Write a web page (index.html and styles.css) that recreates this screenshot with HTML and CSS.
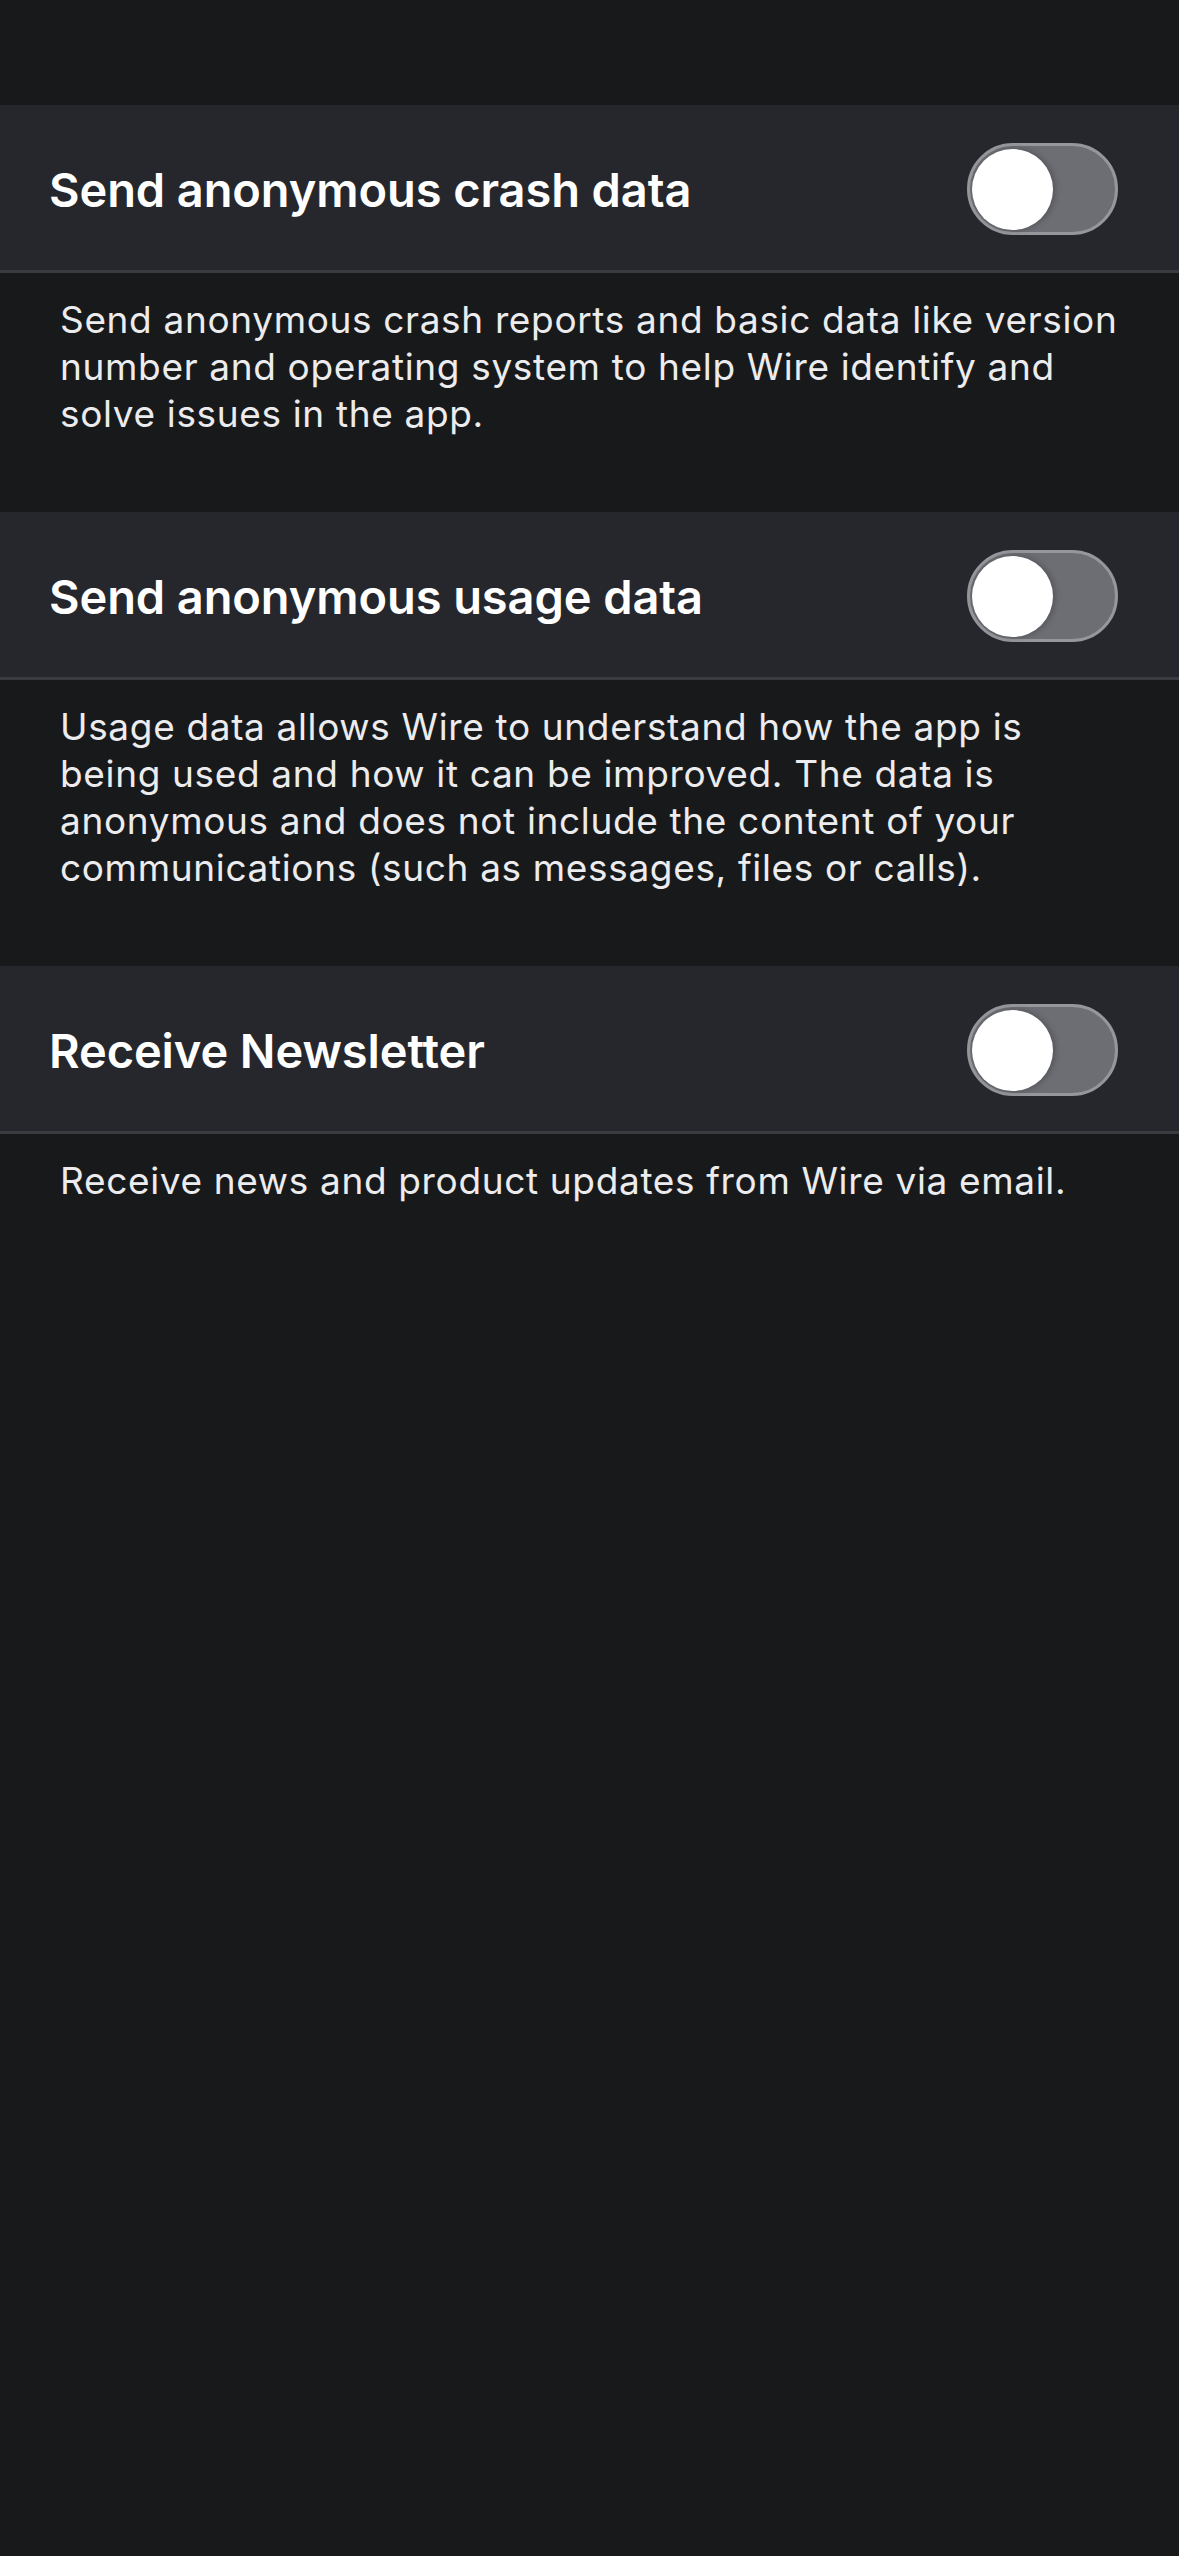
FILE: index.html
```html
<!DOCTYPE html>
<html lang="en">
<head>
<meta charset="utf-8">
<title>Privacy settings</title>
<link rel="stylesheet" href="styles.css">
</head>
<body>
<main class="screen">
  <section class="group">
    <div class="row">
      <span class="row-title">Send anonymous crash data</span>
      <span class="toggle"><span class="knob"></span></span>
    </div>
    <p class="desc">Send anonymous crash reports and basic data like version number and operating system to help Wire identify and solve issues in the app.</p>
  </section>
  <section class="group">
    <div class="row">
      <span class="row-title">Send anonymous usage data</span>
      <span class="toggle"><span class="knob"></span></span>
    </div>
    <p class="desc">Usage data allows Wire to understand how the app is being used and how it can be improved. The data is anonymous and does not include the content of your communications (such as messages, files or calls).</p>
  </section>
  <section class="group">
    <div class="row">
      <span class="row-title">Receive Newsletter</span>
      <span class="toggle"><span class="knob"></span></span>
    </div>
    <p class="desc">Receive news and product updates from Wire via email.</p>
  </section>
</main>
</body>
</html>
```

FILE: styles.css
```css
html, body {
  margin: 0;
  padding: 0;
  background: #18191b;
}

body {
  font-family: Inter, "Noto Sans", "Liberation Sans", sans-serif;
  color: #ffffff;
  min-height: 2556px;
}

.screen {
  padding-top: 105px;
  display: flex;
  flex-direction: column;
}

.row {
  height: 168px;
  box-sizing: border-box;
  background: #26272c;
  border-bottom: 3px solid #3a3b41;
  display: flex;
  align-items: center;
  justify-content: space-between;
  padding: 3px 61px 0 49px;
}

.row-title {
  font-size: 47px;
  font-weight: 600;
  letter-spacing: -0.1px;
}

.toggle {
  width: 151px;
  height: 92px;
  box-sizing: border-box;
  border: 3px solid #96979c;
  border-radius: 46px;
  background: #6c6e74;
  display: flex;
  align-items: center;
  padding-left: 2px;
}

.knob {
  width: 81px;
  height: 81px;
  border-radius: 50%;
  background: #ffffff;
  box-shadow: 2px 0 6px rgba(0, 0, 0, 0.25);
}

.desc {
  margin: 0;
  padding: 23px 60px 75px 60px;
  font-size: 37px;
  letter-spacing: 0.65px;
  line-height: 47px;
  color: #ececee;
  font-weight: 400;
}
```
